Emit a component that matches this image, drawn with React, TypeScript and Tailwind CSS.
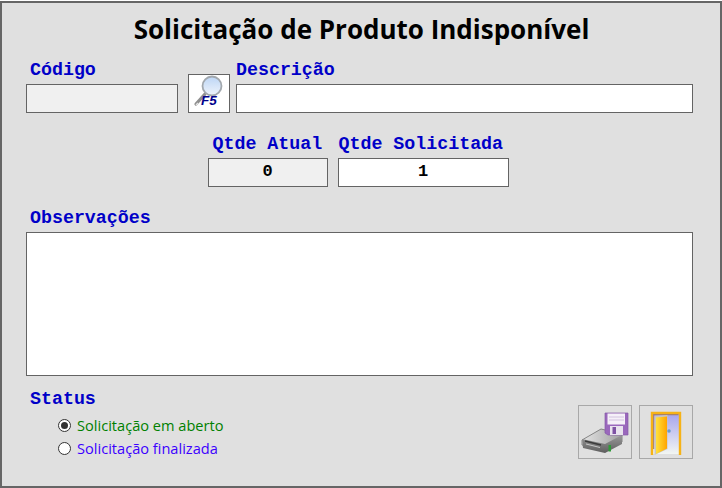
const labelClass = "font-['Liberation_Mono',monospace] font-bold text-[18.3px] leading-5 text-[#0000c8]";
const boxClass = "border border-[#646464] font-['Liberation_Mono',monospace] font-bold text-[17px] text-black text-center outline-none";

function SearchIcon() {
  return (
    <svg width="40" height="37" viewBox="0 0 40 37">
      <defs>
        <linearGradient id="lens" x1="0" y1="0" x2="0" y2="1">
          <stop offset="0" stopColor="#bcd5f5" />
          <stop offset="0.5" stopColor="#d6e5f8" />
          <stop offset="1" stopColor="#eef4fc" />
        </linearGradient>
      </defs>
      <path d="M16 19 L7 29" stroke="#8f8f8f" strokeWidth="3.2" strokeLinecap="round" />
      <path d="M7 30 L9 28" stroke="#e4e4e4" strokeWidth="1.5" />
      <circle cx="23" cy="11" r="9.5" fill="url(#lens)" stroke="#a2a8ae" strokeWidth="1.8" />
      <text x="12" y="30" fontFamily="'Liberation Sans', sans-serif" fontStyle="italic" fontWeight="700" fontSize="13.5" fill="#00008c">F5</text>
    </svg>
  );
}

function SaveIcon() {
  return (
    <svg width="52" height="52" viewBox="0 0 52 52">
      <defs>
        <linearGradient id="drive" x1="0" y1="0" x2="1" y2="0">
          <stop offset="0" stopColor="#e4e4e4" />
          <stop offset="1" stopColor="#a0a0a0" />
        </linearGradient>
        <linearGradient id="front" x1="0" y1="0" x2="0" y2="1">
          <stop offset="0" stopColor="#9a9a9a" />
          <stop offset="1" stopColor="#5e5e5e" />
        </linearGradient>
      </defs>
      <path d="M3 34 L22 23 L43 28 L43 36 L26 44 L3 39 Z" fill="url(#drive)" stroke="#6e6e6e" strokeWidth="0.8" />
      <path d="M3 33 L26 38 L43 29 L43 38 L26 47 L4 42 Z" fill="url(#front)" />
      <path d="M6 35 L22 39" stroke="#3a3a3a" strokeWidth="1.6" />
      <path d="M7 38 L21 41.5" stroke="#dcdcdc" strokeWidth="0.8" />
      <path d="M26 7 H49 V29 H29 L26 27 Z" fill="#9a68bc" stroke="#8459a6" strokeWidth="0.7" />
      <rect x="28.5" y="7.5" width="17.5" height="11" fill="#f5f0f8" />
      <path d="M30 11 H45 M30 14 H45" stroke="#c9b6d8" strokeWidth="0.8" />
      <rect x="31" y="20" width="13" height="9" fill="#e9e3ee" />
      <rect x="33.5" y="21" width="3.5" height="7" fill="#7f52a4" />
      <rect x="29.5" y="39" width="2.5" height="6.5" fill="#2f9a38" />
    </svg>
  );
}

function DoorIcon() {
  return (
    <svg width="52" height="52" viewBox="0 0 52 52">
      <defs>
        <linearGradient id="sky" x1="0" y1="0" x2="0" y2="1">
          <stop offset="0" stopColor="#a5a2ee" />
          <stop offset="1" stopColor="#f2f6f2" />
        </linearGradient>
        <linearGradient id="leaf" x1="0" y1="0" x2="1" y2="0">
          <stop offset="0" stopColor="#ffe23c" />
          <stop offset="1" stopColor="#ffa400" />
        </linearGradient>
      </defs>
      <rect x="12" y="7" width="28" height="41" fill="url(#sky)" />
      <path d="M12 49 V7 H40 V49" fill="none" stroke="#f6b216" strokeWidth="2.4" />
      <path d="M13.7 43 V8.7 H38.5" fill="none" stroke="#a88266" strokeWidth="1.2" />
      <path d="M14.5 10 L27.5 9 L27.5 43 L14.5 49 Z" fill="#c9c6c0" />
      <path d="M16 11.5 L27 10.5 L27 42.5 L16 48 Z" fill="url(#leaf)" />
      <circle cx="29" cy="25" r="1.8" fill="#6b9ccb" />
    </svg>
  );
}

export default function App() {
  return (
    <div className="w-[722px] h-[488px] pt-px overflow-hidden bg-white">
      <div className="w-[722px] h-[487px] border-2 border-[#666666] bg-[#e0e0e0] pt-[9px] pl-6 pr-[27px]">
        <h1 className="font-['Open_Sans',sans-serif] font-bold text-[26px] leading-[34px] text-black text-center pl-1">
          Solicitação de Produto Indisponível
        </h1>

        <div className="flex items-end mt-3.5">
          <div className="flex flex-col w-[152px]">
            <span className={`${labelClass} pl-1`}>Código</span>
            <input readOnly className={`${boxClass} h-[29px] mt-1 bg-[#f0f0f0]`} />
          </div>
          <button className="w-[42px] h-[39px] ml-2.5 border border-[#646464] bg-white flex items-center justify-center">
            <SearchIcon />
          </button>
          <div className="flex flex-col flex-1 ml-1.5">
            <span className={labelClass}>Descrição</span>
            <input readOnly className={`${boxClass} h-[29px] mt-1 w-full bg-white`} />
          </div>
        </div>

        <div className="flex justify-center mt-[21px] pr-[3px] gap-2.5">
          <div className="flex flex-col w-[120px]">
            <span className={`${labelClass} pl-[5px]`}>Qtde Atual</span>
            <input readOnly value="0" className={`${boxClass} h-[29px] mt-1 pb-[3px] bg-[#f0f0f0]`} />
          </div>
          <div className="flex flex-col w-[171px]">
            <span className={`${labelClass} pl-px`}>Qtde Solicitada</span>
            <input readOnly value="1" className={`${boxClass} h-[29px] mt-1 pb-[3px] bg-white`} />
          </div>
        </div>

        <div className="flex flex-col mt-[21px]">
          <span className={`${labelClass} pl-1`}>Observações</span>
          <textarea readOnly className={`${boxClass} h-[144px] mt-1 resize-none bg-white`} />
        </div>

        <div className="flex justify-between mt-[13px]">
          <div className="flex flex-col pl-1">
            <span className={labelClass}>Status</span>
            <label className="flex items-center gap-1.5 pl-7 mt-[5px] font-['Open_Sans',sans-serif] text-[14.6px] leading-[23px] text-[#008000]">
              <span className="w-[13px] h-[13px] rounded-full border border-[#333] bg-white flex items-center justify-center">
                <span className="w-[7px] h-[7px] rounded-full bg-[#333]" />
              </span>
              Solicitação em aberto
            </label>
            <label className="flex items-center gap-1.5 pl-7 font-['Open_Sans',sans-serif] text-[14.6px] leading-[23px] text-[#3c00ff]">
              <span className="w-[13px] h-[13px] rounded-full border border-[#333] bg-white" />
              Solicitação finalizada
            </label>
          </div>
          <div className="flex gap-[7px] mt-4">
            <button className="w-[54px] h-[54px] border border-[#a8a8a8] flex items-center justify-center"><SaveIcon /></button>
            <button className="w-[54px] h-[54px] border border-[#a8a8a8] flex items-center justify-center"><DoorIcon /></button>
          </div>
        </div>
      </div>
    </div>
  );
}
